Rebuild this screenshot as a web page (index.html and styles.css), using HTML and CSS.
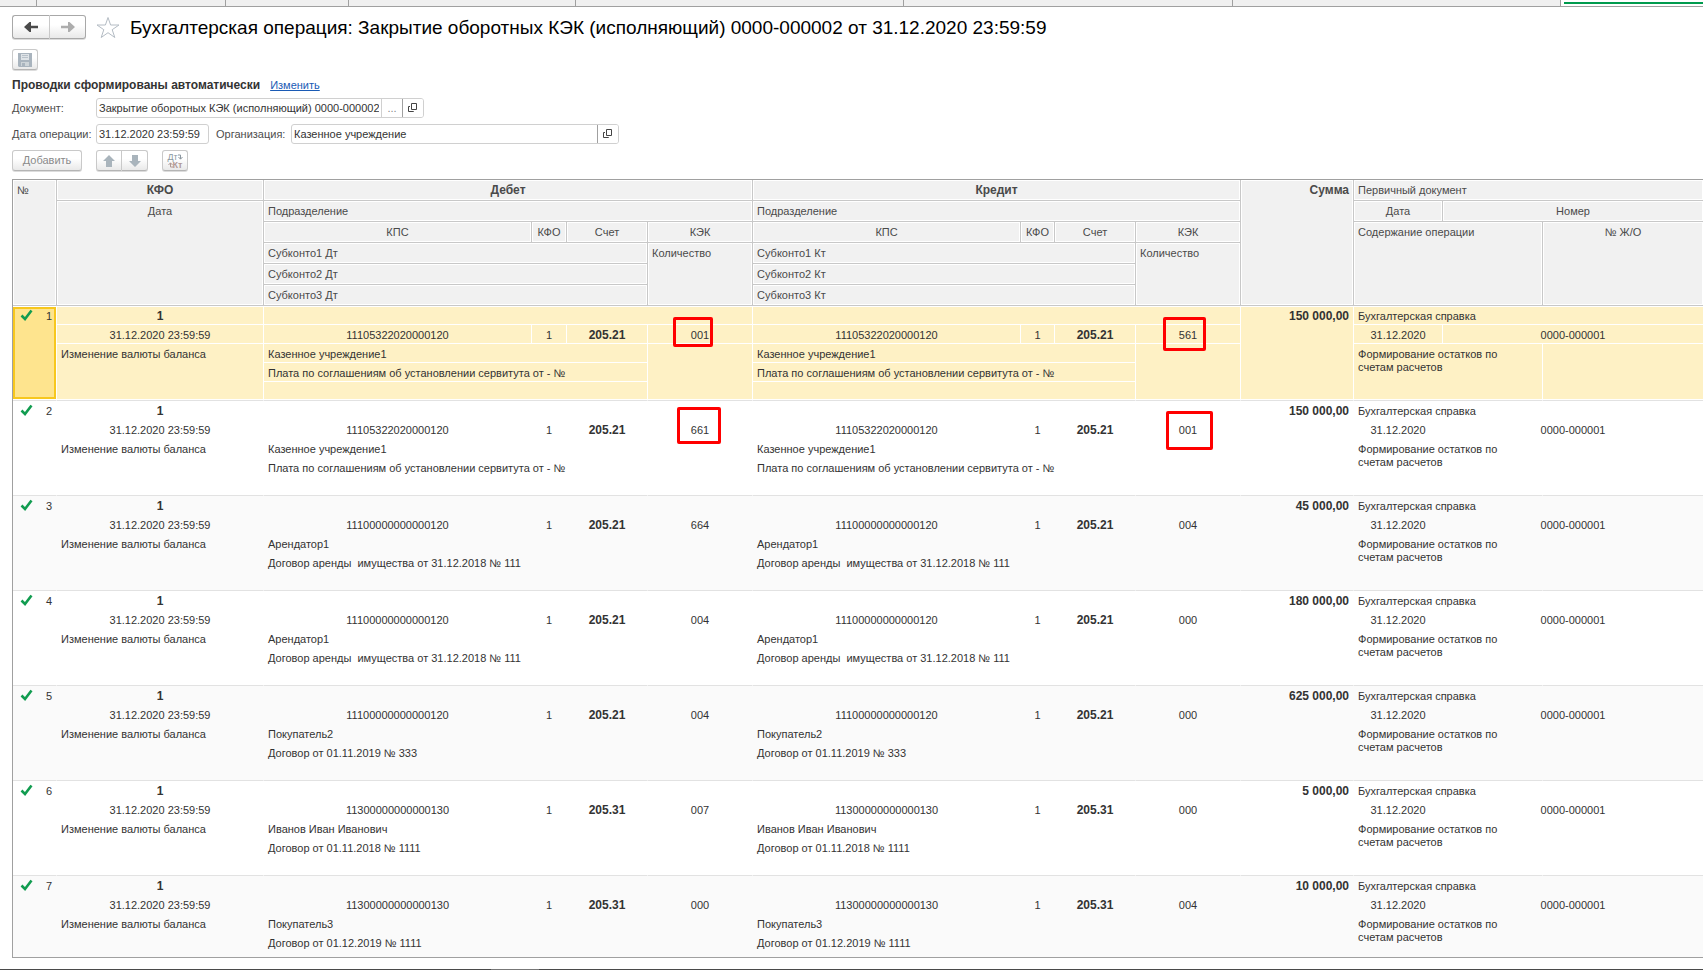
FILE: index.html
```html
<!DOCTYPE html>
<html lang="ru">
<head>
<meta charset="utf-8">
<title>Бухгалтерская операция</title>
<link rel="stylesheet" href="styles.css">
</head>
<body>
<div class="app">
  <nav class="tabs" aria-label="Открытые окна">
    <span class="tab tab-home"></span>
    <span class="tab tab-1"></span>
    <span class="tab tab-2"></span>
    <span class="tab tab-3"></span>
    <span class="tab tab-4"></span>
    <span class="tab tab-5"></span>
    <span class="tab tab-6"></span>
    <span class="tab tab-active"></span>
  </nav>

  <main class="form">
    <header class="title-bar">
      <div class="btn-group nav-group">
        <button type="button" class="btn nav-btn" aria-label="Назад">
          <svg width="14" height="12" viewBox="0 0 14 12"><path d="M0 6 5.500 1H7v3.700h7v2.600H7V11H5.500z" fill="#4a4a4a"/></svg>
        </button>
        <button type="button" class="btn nav-btn" aria-label="Вперед">
          <svg width="14" height="12" viewBox="0 0 14 12"><path d="M14 6 8.500 1H7v3.700H0v2.600h7V11h1.500z" fill="#adadad"/></svg>
        </button>
      </div>
      <svg class="star" width="24" height="23" viewBox="0 0 24 23"><path d="M12 1.500 14.600 9h8.400l-6.800 4.700 2.600 7.800L12 16.700l-6.800 4.800 2.600-7.800L1 9h8.400z" fill="#fff" stroke="#b4bcc4" stroke-width="1"/></svg>
      <h1 class="title">Бухгалтерская операция: Закрытие оборотных КЭК (исполняющий) 0000-000002 от 31.12.2020 23:59:59</h1>
    </header>

    <div class="save-row">
      <button type="button" class="btn icon-btn" aria-label="Записать">
        <svg width="14" height="14" viewBox="0 0 14 14"><path d="M0 0h14v14H1l-1-1z" fill="#a9b4be"/><path d="M3 1h8v6H3z" fill="#dfe4e8"/><path d="M4 2.500h6M4 4.500h6" stroke="#b9c2ca"/><path d="M3 9h8v4H3z" fill="#cdd4d8"/><path d="M4 10h3v3H4z" fill="#a9b4be"/></svg>
      </button>
    </div>

    <p class="auto-row"><b>Проводки сформированы автоматически</b><a href="#">Изменить</a></p>

    <div class="field-row">
      <label class="label-main" for="doc">Документ:</label>
      <div class="field field-doc">
        <input id="doc" type="text" value="Закрытие оборотных КЭК (исполняющий) 0000-000002" readonly>
        <button type="button" class="field-btn dots" aria-label="Выбрать">...</button>
        <button type="button" class="field-btn open-btn" aria-label="Открыть">
          <svg width="10" height="10" viewBox="0 0 10 10" fill="none" stroke="#444"><path d="M3.500.5h5v6h-5zM2 3.500H.5v5h5V8"/></svg>
        </button>
      </div>
    </div>

    <div class="field-row">
      <label class="label-main" for="date">Дата операции:</label>
      <div class="field field-date"><input id="date" type="text" value="31.12.2020 23:59:59"></div>
      <label class="label-org" for="org">Организация:</label>
      <div class="field field-org">
        <input id="org" type="text" value="Казенное учреждение">
        <button type="button" class="field-btn open-btn" aria-label="Открыть организацию">
          <svg width="10" height="10" viewBox="0 0 10 10" fill="none" stroke="#444"><path d="M3.500.5h5v6h-5zM2 3.500H.5v5h5V8"/></svg>
        </button>
      </div>
    </div>

    <div class="command-row">
      <button type="button" class="btn add-btn">Добавить</button>
      <div class="btn-group">
        <button type="button" class="btn icon-btn" aria-label="Вверх">
          <svg width="12" height="12" viewBox="0 0 12 12"><path d="M6 0l6 6H9v6H3V6H0z" fill="#a9b4bc"/></svg>
        </button>
        <button type="button" class="btn icon-btn" aria-label="Вниз">
          <svg width="12" height="12" viewBox="0 0 12 12"><path d="M6 12l6-6H9V0H3v6H0z" fill="#a9b4bc"/></svg>
        </button>
      </div>
      <button type="button" class="btn icon-btn dtkt" aria-label="Дт Кт">
        <span class="dt">Дт<svg width="5" height="6" viewBox="0 0 5 6"><path d="M0 1h2.500v4M.5 3l2 2.200L4.500 3" fill="none" stroke="#8b979f"/></svg></span>
        <span class="kt"><svg width="5" height="6" viewBox="0 0 5 6"><path d="M5 5H2.500V1M.5 3l2-2.200L4.500 3" fill="none" stroke="#b09a96"/></svg>Кт</span>
      </button>
    </div>

    <table class="grid" id="entries">
      <colgroup>
        <col class="c-num"><col class="c-kfo-date">
        <col class="c-kps"><col class="c-kfo-dt"><col class="c-acc"><col class="c-kek">
        <col class="c-kps"><col class="c-kfo-kt"><col class="c-acc"><col class="c-kek">
        <col class="c-sum"><col class="c-doc-date"><col class="c-doc"><col>
      </colgroup>
      <thead>
        <tr><th rowspan="6">№</th><th class="mid strong">КФО</th><th class="mid strong" colspan="4">Дебет</th><th class="mid strong" colspan="4">Кредит</th><th class="right strong" rowspan="6">Сумма</th><th class="last" colspan="3">Первичный документ</th></tr>
        <tr><th class="mid" rowspan="5">Дата</th><th colspan="4">Подразделение</th><th colspan="4">Подразделение</th><th class="mid">Дата</th><th class="mid last" colspan="2">Номер</th></tr>
        <tr><th class="mid">КПС</th><th class="mid">КФО</th><th class="mid">Счет</th><th class="mid">КЭК</th><th class="mid">КПС</th><th class="mid">КФО</th><th class="mid">Счет</th><th class="mid">КЭК</th><th colspan="2" rowspan="4">Содержание операции</th><th class="mid last" rowspan="4">№ Ж/О</th></tr>
        <tr><th colspan="3">Субконто1 Дт</th><th rowspan="3">Количество</th><th colspan="3">Субконто1 Кт</th><th rowspan="3">Количество</th></tr>
        <tr><th colspan="3">Субконто2 Дт</th><th colspan="3">Субконто2 Кт</th></tr>
        <tr><th colspan="3">Субконто3 Дт</th><th colspan="3">Субконто3 Кт</th></tr>
      </thead>
    </table>
  </main>
  <footer class="bottom-bar"><span class="bottom-grip"></span></footer>
</div>
<script src="entries.js"></script>
</body>
</html>
```
FILE: styles.css
```css
* { box-sizing: border-box; }
body {
  margin: 0;
  background: #fff;
  color: #333;
  font: 11px/13px "Liberation Sans", Arial, sans-serif;
}
button, input { font: inherit; color: inherit; margin: 0; }
.app { display: flex; flex-direction: column; min-height: 100vh; overflow: hidden; }

.tabs { display: flex; height: 7px; background: #f0f0f0; border-bottom: 1px solid #a0a0a0; }
.tab { border-right: 1px solid #a0a0a0; }
.tab-home { width: 37px; }
.tab-1 { width: 189px; }
.tab-2 { width: 123px; }
.tab-3 { width: 227px; }
.tab-4 { width: 328px; }
.tab-5 { width: 329px; }
.tab-6 { width: 328px; }
.tab-active { flex: 1; border-right: 0; background: #fff; padding: 2px 0 0 3px; }
.tab-active::before { content: ""; display: block; height: 2px; background: #009b4e; }

.form { flex: 1; display: flex; flex-direction: column; padding: 8px 0 11px 12px; }

.btn {
  display: flex; align-items: center; justify-content: center;
  padding: 0;
  border: 1px solid #c9c9c9; border-bottom-color: #b4b4b4; border-radius: 3px;
  background: linear-gradient(#fff 40%, #e9e9e9);
  box-shadow: 0 1px 0 #dcdcdc;
}
.btn-group { display: flex; }
.btn-group .btn:first-child { border-radius: 3px 0 0 3px; }
.btn-group .btn:last-child { border-radius: 0 3px 3px 0; border-left: 0; }
.nav-btn { width: 36px; height: 24px; border-color: #a8a8a8; }
.nav-btn:first-child { width: 38px; border-right-color: #c9c9c9; }
.icon-btn { width: 26px; height: 21px; }

.title-bar { display: flex; align-items: center; height: 24px; }
.star { margin: 0 10px; }
.title { margin: 0; padding-top: 1px; font-size: 19px; line-height: 24px; font-weight: 400; color: #000; white-space: nowrap; }
.save-row { margin-top: 10px; }
.auto-row { display: flex; gap: 10px; margin: 9px 0 0; }
.auto-row b { font-size: 12px; }
.auto-row a { color: #1a5bb5; }

.field-row { display: flex; align-items: center; height: 20px; margin-top: 6px; }
.label-main { width: 84px; color: #4d4d4d; white-space: nowrap; }
.label-org { width: 75px; margin-left: 7px; color: #4d4d4d; white-space: nowrap; }
.field { display: flex; height: 20px; border: 1px solid #d0d0d0; border-radius: 3px; background: #fff; overflow: hidden; }
.field input { flex: 1; min-width: 0; border: 0; padding: 0 2px; background: transparent; outline: 0; }
.field-doc { width: 328px; }
.field-date { width: 113px; }
.field-org { width: 328px; }
.field-btn { display: flex; align-items: center; justify-content: center; width: 21px; padding: 0; border: 0; border-left: 1px solid #a0a0a0; background: #fff; }
.dots { border-left-color: #d0d0d0; color: #888; }

.command-row { display: flex; gap: 14px; margin-top: 6px; }
.add-btn { width: 70px; height: 21px; color: #8a8a8a; }
.dtkt { flex-direction: column; font-size: 9px; line-height: 8px; }
.dtkt span { display: flex; align-items: center; }
.dt { color: #8b979f; }
.kt { color: #b09a96; font-weight: 700; }

.grid {
  width: 100%; margin-top: 8px;
  table-layout: fixed; border-collapse: separate; border-spacing: 0;
  border: 1px solid #a0a0a0; border-right: 0;
}
.c-num { width: 44px; }
.c-kfo-date { width: 207px; }
.c-kps { width: 268px; }
.c-kfo-dt { width: 35px; }
.c-kfo-kt { width: 34px; }
.c-acc { width: 81px; }
.c-kek { width: 105px; }
.c-sum { width: 113px; }
.c-doc-date { width: 89px; }
.c-doc { width: 100px; }

th, td { vertical-align: top; text-align: left; white-space: nowrap; }
th {
  height: 21px; padding: 4px 4px 3px; font-weight: 400; color: #4a4a4a;
  background: #f1f1f1;
  border-right: 1px solid #c8c8c8; border-bottom: 1px solid #c8c8c8;
  box-shadow: inset 0 0 0 1px #fff;
}
th.last, .entry td.last { border-right: 0; }
td { height: 19px; padding: 4px 4px 1px; border-right: 1px solid transparent; border-bottom: 1px solid transparent; }
.mid { text-align: center; }
.right { text-align: right; }
.strong { font-weight: 700; font-size: 12px; }
.wrap { white-space: normal; padding-right: 24px; }

.entry:nth-of-type(n+2):nth-of-type(odd) td { background: #fafafa; }
.entry .end { border-bottom-color: #e2e2e2; }
.entry:last-child .end { border-bottom: 0; }
.entry:last-child tr:last-child td { height: 5px; padding: 0; }

.entry.selected td { background: #fef1c5; border-right-color: #fff; border-bottom-color: #fff; }
.entry.selected tr:first-child td { box-shadow: inset 0 1px 0 #fff; }
.entry.selected .end { border-bottom-color: #e2e2e2; box-shadow: inset 0 -1px 0 #fff; }
.entry.selected tr:first-child td.end { box-shadow: inset 0 1px 0 #fff, inset 0 -1px 0 #fff; }
.entry.selected tr:first-child td.num { background: #fee48e; box-shadow: inset 0 1px 0 #fff, inset 0 -1px 0 #fff, inset 2px 3px 0 #f7c71e, inset -2px -3px 0 #f7c71e; }

.num { padding-top: 3px; }
.num-box { display: flex; justify-content: space-between; padding-left: 3px; }
.num-box span { padding-top: 1px; }
.kek { position: relative; }
.mark { position: absolute; border: 3px solid #f00; border-radius: 2px; }
.mark-1 { left: 25px; top: -8px; width: 40px; height: 30px; }
.mark-2 { left: 27px; top: -8px; width: 43px; height: 34px; }
.mark-3 { left: 29px; top: -13px; width: 44px; height: 37px; }
.mark-4 { left: 30px; top: -9px; width: 47px; height: 39px; }

.bottom-bar { height: 1px; background: #4a4a4a; padding-left: 491px; }
.bottom-grip { display: block; width: 48px; height: 1px; background: #777; }
```
FILE: entries.js
```js
const PLOT = ["Казенное учреждение1", "Плата по соглашениям об установлении сервитута от - №"];
const RENT = ["Арендатор1", "Договор аренды &nbsp;имущества от 31.12.2018 № 111"];
const entries = [
  { kps: "11105322020000120", acc: "205.21", dt: "001", kt: "561", sub: PLOT, sum: "150 000,00", marks: [1, 2] },
  { kps: "11105322020000120", acc: "205.21", dt: "661", kt: "001", sub: PLOT, sum: "150 000,00", marks: [3, 4] },
  { kps: "11100000000000120", acc: "205.21", dt: "664", kt: "004", sub: RENT, sum: "45 000,00" },
  { kps: "11100000000000120", acc: "205.21", dt: "004", kt: "000", sub: RENT, sum: "180 000,00" },
  { kps: "11100000000000120", acc: "205.21", dt: "004", kt: "000", sub: ["Покупатель2", "Договор от 01.11.2019 № 333"], sum: "625 000,00" },
  { kps: "11300000000000130", acc: "205.31", dt: "007", kt: "000", sub: ["Иванов Иван Иванович", "Договор от 01.11.2018 № 1111"], sum: "5 000,00" },
  { kps: "11300000000000130", acc: "205.31", dt: "000", kt: "004", sub: ["Покупатель3", "Договор от 01.12.2019 № 1111"], sum: "10 000,00" }
];
const check = '<svg width="13" height="12" viewBox="0 0 13 12"><path d="M1.500 6.500 5 10 11.500 1.500" fill="none" stroke="#119c50" stroke-width="2.600"/></svg>';

const account = (e, kek, mark) =>
  `<td class="mid">${e.kps}</td><td class="mid">1</td><td class="mid strong">${e.acc}</td>` +
  `<td class="mid kek">${kek}${mark ? `<span class="mark mark-${mark}"></span>` : ""}</td>`;

const table = document.getElementById("entries");
entries.forEach((e, i) => {
  const marks = e.marks || [];
  const body = document.createElement("tbody");
  body.className = i === 0 ? "entry selected" : "entry";
  body.innerHTML = `
    <tr><td class="num end" rowspan="5"><div class="num-box">${check}<span>${i + 1}</span></div></td>
      <td class="mid strong">1</td><td colspan="4"></td><td colspan="4"></td>
      <td class="right strong end" rowspan="5">${e.sum}</td><td class="last" colspan="3">Бухгалтерская справка</td></tr>
    <tr><td class="mid">31.12.2020 23:59:59</td>${account(e, e.dt, marks[0])}${account(e, e.kt, marks[1])}
      <td class="mid">31.12.2020</td><td class="mid last" colspan="2">0000-000001</td></tr>
    <tr><td class="end" rowspan="3">Изменение валюты баланса</td>
      <td colspan="3">${e.sub[0]}</td><td class="end" rowspan="3"></td>
      <td colspan="3">${e.sub[0]}</td><td class="end" rowspan="3"></td>
      <td class="wrap end" colspan="2" rowspan="3">Формирование остатков по счетам расчетов</td><td class="end last" rowspan="3"></td></tr>
    <tr><td colspan="3">${e.sub[1]}</td><td colspan="3">${e.sub[1]}</td></tr>
    <tr><td class="end" colspan="3"></td><td class="end" colspan="3"></td></tr>`;
  table.append(body);
});
```
